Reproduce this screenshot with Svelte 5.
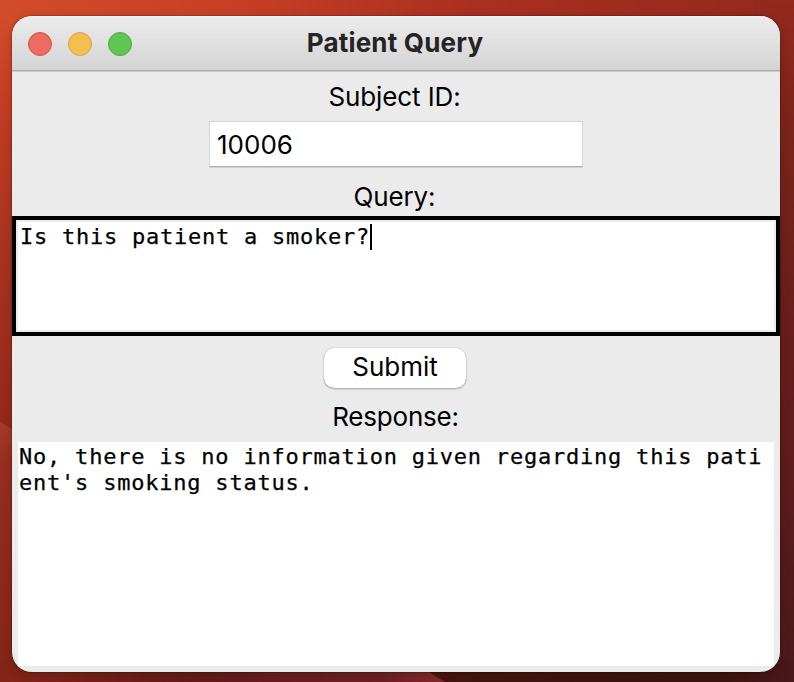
<script>
  let subject = '10006';
  let query = 'Is this patient a smoker?';
  let response = ['No, there is no information given regarding this pati', "ent's smoking status."];
  let lights = ['close', 'minimize', 'zoom'];
</script>

<main class="desktop">
  <svg class="wallpaper" viewBox="0 0 794 682" aria-hidden="true">
    <defs>
      <linearGradient id="top"><stop offset="0" stop-color="#d24c29"/><stop offset=".3" stop-color="#c63f25"/><stop offset=".6" stop-color="#a92f21"/><stop offset="1" stop-color="#92291d"/></linearGradient>
      <linearGradient id="left" x1="0" y1="0" x2="0" y2="1"><stop offset="0" stop-color="#d24c29"/><stop offset=".16" stop-color="#bf3b22"/><stop offset=".35" stop-color="#a83320"/><stop offset=".62" stop-color="#942819"/></linearGradient>
      <linearGradient id="lower" x1="0" y1="0" x2="0" y2="1"><stop offset="0" stop-color="#a93b29"/><stop offset=".15" stop-color="#962d20"/><stop offset="1" stop-color="#842416"/></linearGradient>
      <linearGradient id="right" x1="0" y1="0" x2="0" y2="1"><stop offset="0" stop-color="#94291d"/><stop offset=".16" stop-color="#7d241b"/><stop offset=".5" stop-color="#661e1c"/><stop offset="1" stop-color="#4b181a"/></linearGradient>
      <linearGradient id="bottom"><stop offset="0" stop-color="#842416"/><stop offset=".25" stop-color="#601c19"/><stop offset=".48" stop-color="#6b2022"/><stop offset=".55" stop-color="#80282a"/></linearGradient>
      <linearGradient id="dark"><stop offset="0" stop-color="#48140e"/><stop offset=".8" stop-color="#3e120e"/><stop offset="1" stop-color="#4b181a"/></linearGradient>
    </defs>
    <rect width="794" height="40" fill="url(#top)"/>
    <rect y="16" width="40" height="666" fill="url(#left)"/>
    <path d="M0 422 L12 429 L40 446 V682 H0Z" fill="url(#lower)"/>
    <rect x="754" width="40" height="682" fill="url(#right)"/>
    <rect y="660" width="794" height="22" fill="url(#bottom)"/>
    <path d="M394 650 L429 672 L445 682 H794 V660 H780 V650Z" fill="url(#dark)"/>
  </svg>

  <section class="window">
    <header>
      <div class="lights">
        {#each lights as light}<span class={light}></span>{/each}
      </div>
      <h1>Patient Query</h1>
    </header>
    <div class="label first">Subject ID:</div>
    <div class="entry"><span>{subject}</span></div>
    <div class="label second">Query:</div>
    <div class="query"><div class="paper"><span>{query}</span><i class="caret"></i></div></div>
    <button>Submit</button>
    <div class="label third">Response:</div>
    <div class="response">
      {#each response as line}<div>{line}</div>{/each}
    </div>
  </section>
</main>

<style>
  :global(body) { margin: 0; overflow: hidden; }
  .desktop {
    position: relative;
    box-sizing: border-box;
    width: 794px;
    height: 682px;
    padding: 16px 14px 10px 12px;
    font-family: Inter, "Liberation Sans", sans-serif;
    font-size: 26px;
    color: #000;
    background: #7d241b;
    overflow: hidden;
  }
  .wallpaper { position: absolute; inset: 0; width: 794px; height: 682px; }
  .window {
    position: relative;
    display: flex;
    flex-direction: column;
    align-items: center;
    width: 768px;
    height: 656px;
    border-radius: 20px;
    overflow: hidden;
    background: #ebebeb;
    box-shadow: 0 0 2px rgba(0, 0, 0, .6), 0 2px 10px rgba(0, 0, 0, .15);
  }
  header {
    flex: none;
    box-sizing: border-box;
    display: grid;
    grid-template-columns: 1fr auto 1fr;
    align-items: center;
    width: 100%;
    height: 56px;
    padding: 0 2px 0 0;
    border-bottom: 1px solid #cacaca;
    background: linear-gradient(#f6f6f6 0, #ebebeb 2px, #d4d4d4 54px, #adadad 54px);
  }
  .lights { display: flex; gap: 16px; padding: 1px 0 0 16px; }
  .lights span { box-sizing: border-box; width: 24px; height: 24px; border-radius: 50%; }
  .close { background: #ed6b60; border: 1px solid #d35047; }
  .minimize { background: #f5bf4f; border: 1px solid #d8a03d; }
  .zoom { background: #62c655; border: 1px solid #50a73e; }
  h1 {
    margin: 0;
    padding-bottom: 2px;
    font-size: 26px;
    line-height: 32px;
    font-weight: 700;
    color: #242424;
    letter-spacing: .2px;
    white-space: nowrap;
  }
  .label { flex: none; height: 32px; line-height: 32px; white-space: nowrap; }
  .first { margin-top: 9px; padding-right: 3px; letter-spacing: -.1px; }
  .entry {
    flex: none;
    box-sizing: border-box;
    width: 374px;
    height: 46px;
    margin-top: 8px;
    padding-left: 7px;
    border: 1px solid #d6d6d6;
    border-bottom: 1px solid #b0b0b0;
    box-shadow: 0 1px 0 #d0d0d0;
    background: #fff;
    line-height: 46px;
  }
  .second { margin-top: 14px; padding-right: 3px; letter-spacing: -.15px; }
  .query {
    flex: none;
    box-sizing: border-box;
    width: 768px;
    height: 120px;
    margin-top: 3px;
    border: 4px solid #000;
    padding: 2px;
    background: #ebebeb;
  }
  .paper {
    display: flex;
    height: 108px;
    padding-left: 2px;
    background: #fff;
  }
  .paper span { padding-top: 2px; }
  .paper, .response {
    font-family: "DejaVu Sans Mono", monospace;
    font-size: 22px;
    line-height: 26px;
    letter-spacing: .755px;
    white-space: pre;
    -webkit-text-stroke: .25px #000;
  }
  .caret { width: 2px; height: 26px; margin-top: 2px; background: #000; }
  button {
    flex: none;
    width: 142px;
    height: 40px;
    margin: 12px 2px 0 0;
    padding: 0;
    border: 0;
    border-radius: 10px;
    background: #fff;
    color: #000;
    font: 26px/38px Inter, "Liberation Sans", sans-serif;
    padding-bottom: 2px;
    box-shadow: 0 0 1px rgba(0, 0, 0, .3), 0 1px 2px rgba(0, 0, 0, .3);
  }
  .third { margin-top: 13px; padding-right: 1px; letter-spacing: -.2px; }
  .response {
    flex: none;
    box-sizing: border-box;
    width: 756px;
    height: 224px;
    margin-top: 9px;
    padding: 2px 0 0 1px;
    background: #fff;
    letter-spacing: .78px;
  }
</style>
